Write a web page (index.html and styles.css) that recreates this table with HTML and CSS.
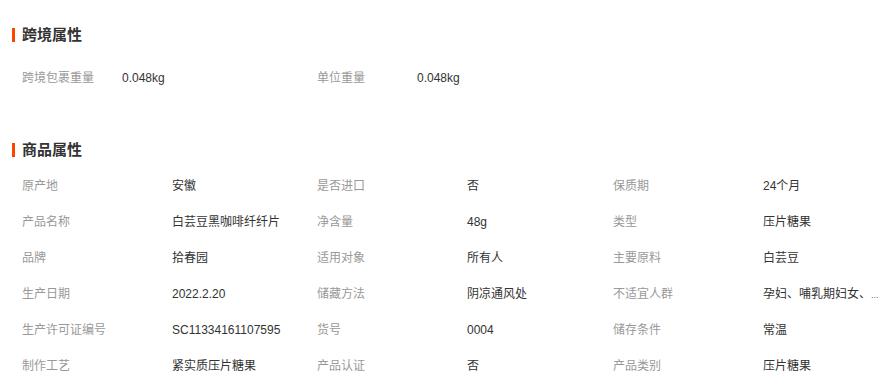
FILE: index.html
```html
<!DOCTYPE html>
<html lang="zh-CN">
<head>
<meta charset="utf-8">
<title>属性</title>
<link rel="stylesheet" href="styles.css">
</head>
<body>
<div class="page">
  <section class="block block-cross">
    <h3 class="block-title">跨境属性</h3>
    <ul class="attr-list cross-list">
      <li class="attr cross"><span class="attr-name">跨境包裹重量</span><span class="attr-value">0.048kg</span></li>
      <li class="attr cross"><span class="attr-name">单位重量</span><span class="attr-value">0.048kg</span></li>
    </ul>
  </section>
  <section class="block block-goods">
    <h3 class="block-title">商品属性</h3>
    <ul class="attr-list goods-list">
      <li class="attr"><span class="attr-name">原产地</span><span class="attr-value">安徽</span></li>
      <li class="attr"><span class="attr-name">是否进口</span><span class="attr-value">否</span></li>
      <li class="attr"><span class="attr-name">保质期</span><span class="attr-value">24个月</span></li>
      <li class="attr"><span class="attr-name">产品名称</span><span class="attr-value">白芸豆黑咖啡纤纤片</span></li>
      <li class="attr"><span class="attr-name">净含量</span><span class="attr-value">48g</span></li>
      <li class="attr"><span class="attr-name">类型</span><span class="attr-value">压片糖果</span></li>
      <li class="attr"><span class="attr-name">品牌</span><span class="attr-value">拾春园</span></li>
      <li class="attr"><span class="attr-name">适用对象</span><span class="attr-value">所有人</span></li>
      <li class="attr"><span class="attr-name">主要原料</span><span class="attr-value">白芸豆</span></li>
      <li class="attr"><span class="attr-name">生产日期</span><span class="attr-value">2022.2.20</span></li>
      <li class="attr"><span class="attr-name">储藏方法</span><span class="attr-value">阴凉通风处</span></li>
      <li class="attr"><span class="attr-name">不适宜人群</span><span class="attr-value">孕妇、哺乳期妇女、<span class="dots">...</span></span></li>
      <li class="attr"><span class="attr-name">生产许可证编号</span><span class="attr-value">SC11334161107595</span></li>
      <li class="attr"><span class="attr-name">货号</span><span class="attr-value">0004</span></li>
      <li class="attr"><span class="attr-name">储存条件</span><span class="attr-value">常温</span></li>
      <li class="attr"><span class="attr-name">制作工艺</span><span class="attr-value">紧实质压片糖果</span></li>
      <li class="attr"><span class="attr-name">产品认证</span><span class="attr-value">否</span></li>
      <li class="attr"><span class="attr-name">产品类别</span><span class="attr-value">压片糖果</span></li>
    </ul>
  </section>
</div>
</body>
</html>
```

FILE: styles.css
```css
html, body {
  margin: 0;
  padding: 0;
  background: #fff;
}
body {
  font-family: "Liberation Sans", "Noto Sans CJK SC", sans-serif;
  font-size: 12px;
  color: #333;
  overflow: hidden;
}
.page {
  width: 880px;
  padding-top: 25px;
}
.block-title {
  margin: 0;
  padding-left: 12px;
  height: 20px;
  line-height: 20px;
  font-size: 15px;
  font-weight: bold;
  color: #333;
  display: flex;
  align-items: center;
}
.block-title::before {
  content: "";
  width: 3px;
  height: 14px;
  background: #ff4400;
  margin-right: 7px;
}
.attr-list {
  list-style: none;
  margin: 0;
  padding: 0 0 0 22px;
}
.cross-list {
  display: flex;
  margin-top: 15px;
}
.block-goods {
  margin-top: 44px;
}
.goods-list {
  display: grid;
  grid-template-columns: 295px 296px 267px;
  margin-top: 8px;
}
.attr {
  display: flex;
  height: 36px;
  line-height: 36px;
  white-space: nowrap;
}
.attr-name {
  width: 150px;
  flex: none;
  color: #999;
}
.attr-value {
  color: #333;
  width: 117px;
}
.dots {
  font-size: 9px;
  color: #666;
}
.cross {
  width: 295px;
}
.cross .attr-name {
  width: 100px;
}
```
